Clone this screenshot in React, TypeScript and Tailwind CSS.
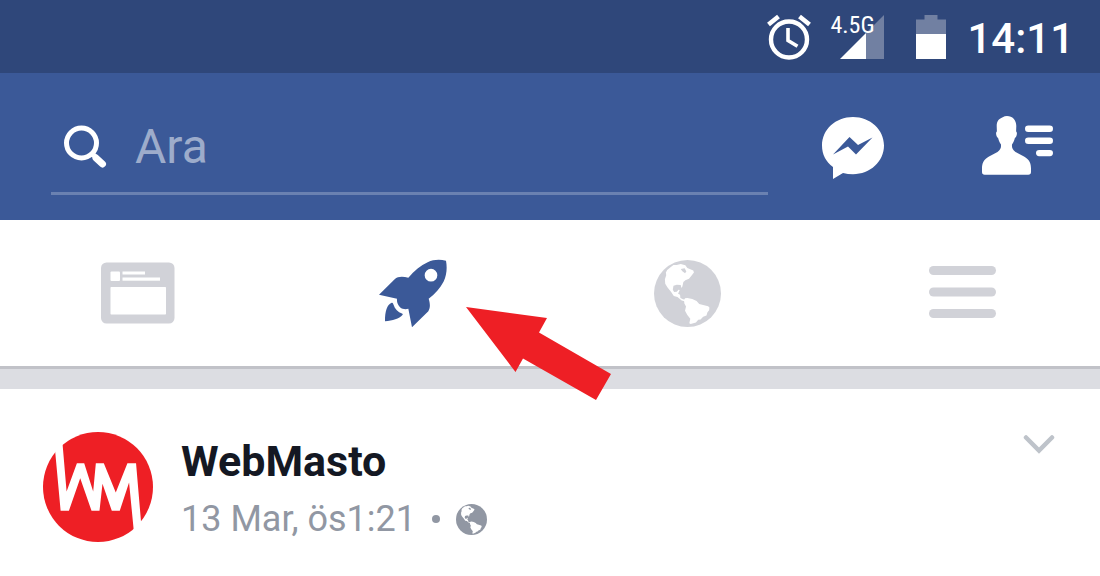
import { ReactNode, useState } from 'react'

interface IconProps {
    className?: string
}

const AlarmIcon = () => (
    <svg viewBox="0 0 44 46" className="h-[46px] w-11" fill="none" stroke="currentColor" aria-hidden="true">
        <circle cx="22" cy="25.5" r="18" strokeWidth="4.4" />
        <path d="M1.5 10.5 11.5 2.5M32.5 2.5 42.5 10.5" strokeWidth="4.6" />
        <path d="M21 14v12.5l9.5 5.8" strokeWidth="3.6" />
    </svg>
)

const SignalIcon = () => (
    <svg viewBox="0 0 44 44" className="size-11" aria-hidden="true">
        <path d="M44 0v44H26V18z" fill="#7180a2" />
        <path d="M26 18v26H0z" fill="#fff" />
    </svg>
)

const BatteryIcon = () => (
    <svg viewBox="0 0 30 44" className="h-11 w-[30px]" aria-hidden="true">
        <path d="M8.5 0h13v4.5H30V19H0V4.5h8.5z" fill="#7180a2" />
        <path d="M0 19h30v25H0z" fill="#fff" />
    </svg>
)

const SearchIcon = () => (
    <svg viewBox="0 0 44 44" className="size-11" fill="none" stroke="#fff" role="img" aria-label="Ara">
        <circle cx="18.5" cy="18" r="15" strokeWidth="5" />
        <path d="m29 28.5 4 4" strokeWidth="5" />
        <path d="m33 33 6.500 6" strokeWidth="7" strokeLinecap="round" />
    </svg>
)

const MessengerIcon = () => (
    <svg viewBox="0 -2 62 64" className="h-16 w-[62px]" aria-hidden="true">
        <path
            fill="#fff"
            d="M31 0C13.5 0 0 12.5 0 28.5c0 9 4 16.500 11 21.500v12l10-6c3.200.8 6.500 1.200 10 1.200 17.200 0 31-12.700 31-28.700S48.200 0 31 0z"
        />
        <path fill="#3b5998" d="M11 37.5 27.5 20l8.500 8 14.500-7.500L34 37.500 26 29.500z" />
    </svg>
)

const ContactsIcon = () => (
    <svg viewBox="0 0 71 62" className="h-[62px] w-[71px]" fill="#fff" aria-hidden="true">
        <path d="M25 0c-1.500 0-3 .4-4.300 1.200-4.200 1.500-6 4.500-6 8.800l.2 5.500c-1.600 1-.7 5.500 1.300 6.800.6 2.400 1.400 4.200 2.700 6 .5 2.800-.2 5.500-3.400 7.700l-8.500 4.500C1.500 43.500 0 47.500 0 52.500V56c0 1.800 1 2.700 2.700 2.700h43.600c1.700 0 2.700-.9 2.700-2.700v-3.500c0-5-1.500-9-7-12L33.500 36c-3.200-2.200-3.900-4.900-3.400-7.700 1.300-1.800 2.100-3.600 2.700-6 2-1.300 2.900-5.800 1.300-6.800l.2-5.500C34.300 4 30.500 0 25 0z" />
        <rect x="43" y="9.500" width="28" height="6.600" rx="3.300" />
        <rect x="43" y="21.500" width="28" height="6.600" rx="3.300" />
        <rect x="54" y="34" width="17" height="6.200" rx="3.100" />
    </svg>
)

const FeedIcon = () => (
    <svg viewBox="0 0 74 62" className="h-[62px] w-[74px]" aria-hidden="true">
        <rect y=".5" width="73.5" height="61" rx="5.500" fill="#d1d2d8" />
        <g fill="#fff">
            <rect x="9.500" y="9.500" width="9.500" height="9.500" rx="1" />
            <rect x="21.500" y="9.500" width="22.500" height="3" />
            <rect x="21.500" y="15.500" width="37.500" height="3.200" />
            <rect x="9.500" y="25" width="55.500" height="27.500" rx=".7" />
        </g>
    </svg>
)

const RocketIcon = () => (
    <svg viewBox="56 42 204 206" className="h-[69px] w-[68px]" aria-hidden="true">
        <path
            fill="#3b5998"
            fillRule="evenodd"
            d="M257 47c4 22 2 43-7 62-10 20-26 37-45 52 5 16 5 28-1 37l-49 48-11-55c-9 2-18 1-25-5-7-7-10-16-9-25l-54-12 47-47c10-9 25-9 41-4 18-22 37-38 58-47 18-8 37-9 55-4zM212 71a19 19 0 1 0 0 38 19 19 0 0 0 0-38z"
        />
        <path
            fill="#3b5998"
            d="M94 173c-14 6-20 25-20 55 23-1 42-7 53-19 1-1 0-3-2-4-12-4-21-13-26-28-1-3-3-4-5-4z"
        />
    </svg>
)

const GlobeIcon = ({ className }: IconProps) => (
    <svg viewBox="41 28 203 203" className={className} aria-hidden="true">
        <circle cx="142.5" cy="129.5" r="101.5" fill="currentColor" />
        <g fill="#fff">
            <path d="M110 43l12-3 14 4 6 8 18 8 2 6-7 9-8 10-11 4-6 6-3 13-3 5-2-9-12-1-10 3-2 12 4 7 8-1 5-6 4 1-5 11 6 3 1 10 8 4 10 2-2 5-12-3-13-11-11-3-8-12-11-14-7-11-1-14 4-12-1-8 4-8 10-8 9-7z" />
            <path d="M132 150L135 144 142 143 157 146 170 152 178 161 190 164 205 168 209 172 208 180 203 186 200 196 190 200 182 208 175 209 168 217 152 222 148 220 151 206 142 195 135 182 138 169 133 160z" />
        </g>
        <path fill="currentColor" d="M122 55l12-2 5 10-4 5-8-6z" />
    </svg>
)

const MenuIcon = () => (
    <svg viewBox="0 0 68 56" className="h-14 w-[68px]" fill="#d1d2d8" aria-hidden="true">
        <rect y="1" width="67" height="9" rx="4.500" />
        <rect y="22.500" width="67" height="9" rx="4.500" />
        <rect y="44" width="67" height="9" rx="4.500" />
    </svg>
)

const Logo = () => (
    <svg viewBox="38 36 331 331" className="size-[110px] shrink-0" role="img" aria-label="WebMasto">
        <circle cx="203.5" cy="201.5" r="165.5" fill="#ee1f25" />
        <path
            fill="#fff"
            d="M74 88 96 62 109 215 140 130H162L189 215 197 130H221L257 218 292 130H318L334 318 312 342 297 188 269 273H245L217 192 208 273H184L150 175 116 273H91z"
        />
    </svg>
)

const ChevronIcon = () => (
    <svg viewBox="0 0 32 20" className="h-5 w-8" fill="none" stroke="#bec3ca" strokeWidth="4.5" aria-hidden="true">
        <path d="m3 3.500 13 13 13-13" strokeLinecap="round" />
    </svg>
)

const PointerArrow = () => (
    <svg viewBox="0 0 146 94" className="pointer-events-none absolute top-[87px] left-[42.4%] h-[94px] w-[146px]" aria-hidden="true">
        <path fill="#ee1f25" d="m0 0 81 11-8 14.500L145 67l-15 26-73-41.500L49.500 65z" />
    </svg>
)

const tabs: { name: string; icon: ReactNode }[] = [
    { name: 'Haber Kaynağı', icon: <FeedIcon /> },
    { name: 'Keşfet', icon: <RocketIcon /> },
    { name: 'Bildirimler', icon: <GlobeIcon className="size-[67px] text-[#d1d2d8]" /> },
    { name: 'Menü', icon: <MenuIcon /> },
]

const StatusBar = () => (
    <div className="flex h-[73px] items-center justify-end bg-[#2f477a] pr-[26px] text-white">
        <AlarmIcon />
        <div className="relative ml-[29px]">
            <SignalIcon />
            <span className="absolute bottom-5 -left-[10px] font-['Liberation_Sans_Narrow','Roboto_Condensed',Roboto,sans-serif] text-2xl leading-7">
                4.5G
            </span>
        </div>
        <div className="ml-8">
            <BatteryIcon />
        </div>
        <time className="ml-[21px] pt-1 text-[42px] leading-[48px] font-medium">14:11</time>
    </div>
)

const Header = () => {
    const [query, setQuery] = useState<string>('')

    return (
        <header className="flex h-[147px] items-center bg-[#3b5998] pr-[47px] pl-[51px]">
            <form
                role="search"
                onSubmit={(e) => e.preventDefault()}
                className="mt-2 flex h-[88px] min-w-0 flex-1 items-center border-b-[3px] border-[#6a81b1] pb-1 pl-3"
            >
                <label htmlFor="search">
                    <SearchIcon />
                </label>
                <input
                    id="search"
                    name="search"
                    type="text"
                    value={query}
                    onChange={(e) => setQuery(e.target.value)}
                    placeholder="Ara"
                    className="ml-7 min-w-0 flex-1 bg-transparent text-5xl leading-14 text-white placeholder-[#9daccb] outline-none"
                />
            </form>
            <button type="button" aria-label="Messenger" className="ml-[54px]">
                <MessengerIcon />
            </button>
            <button type="button" aria-label="Arkadaşlar" className="ml-[98px]">
                <ContactsIcon />
            </button>
        </header>
    )
}

const App = () => {
    const [active, setActive] = useState<string>('Keşfet')

    return (
        <div className="min-h-screen bg-white font-[Roboto,sans-serif]">
            <StatusBar />
            <Header />
            <div className="relative">
                <nav className="grid h-[149px] grid-cols-4 border-b-[3px] border-[#c1c2c8]">
                    {tabs.map((tab) => (
                        <button
                            key={tab.name}
                            type="button"
                            aria-label={tab.name}
                            aria-pressed={tab.name === active}
                            onClick={() => setActive(tab.name)}
                            className="flex items-center justify-center"
                        >
                            {tab.icon}
                        </button>
                    ))}
                </nav>
                <div className="h-5 bg-[#dcdde2]" />
                <PointerArrow />
            </div>
            <article className="flex items-start pt-[43px] pr-[45px] pl-[43px]">
                <Logo />
                <div className="ml-7 flex-1">
                    <h2 className="text-[43px] leading-[58px] font-bold text-[#141823]">WebMasto</h2>
                    <p className="flex items-center text-4xl leading-[58px] text-[#9197a3]">
                        <span>13 Mar, ös1:21</span>
                        <span className="mx-4 size-2 rounded-full bg-[#9197a3]" />
                        <GlobeIcon className="size-[31px]" />
                    </p>
                </div>
                <button type="button" aria-label="Seçenekler" className="pt-0.5">
                    <ChevronIcon />
                </button>
            </article>
        </div>
    )
}

export default App
